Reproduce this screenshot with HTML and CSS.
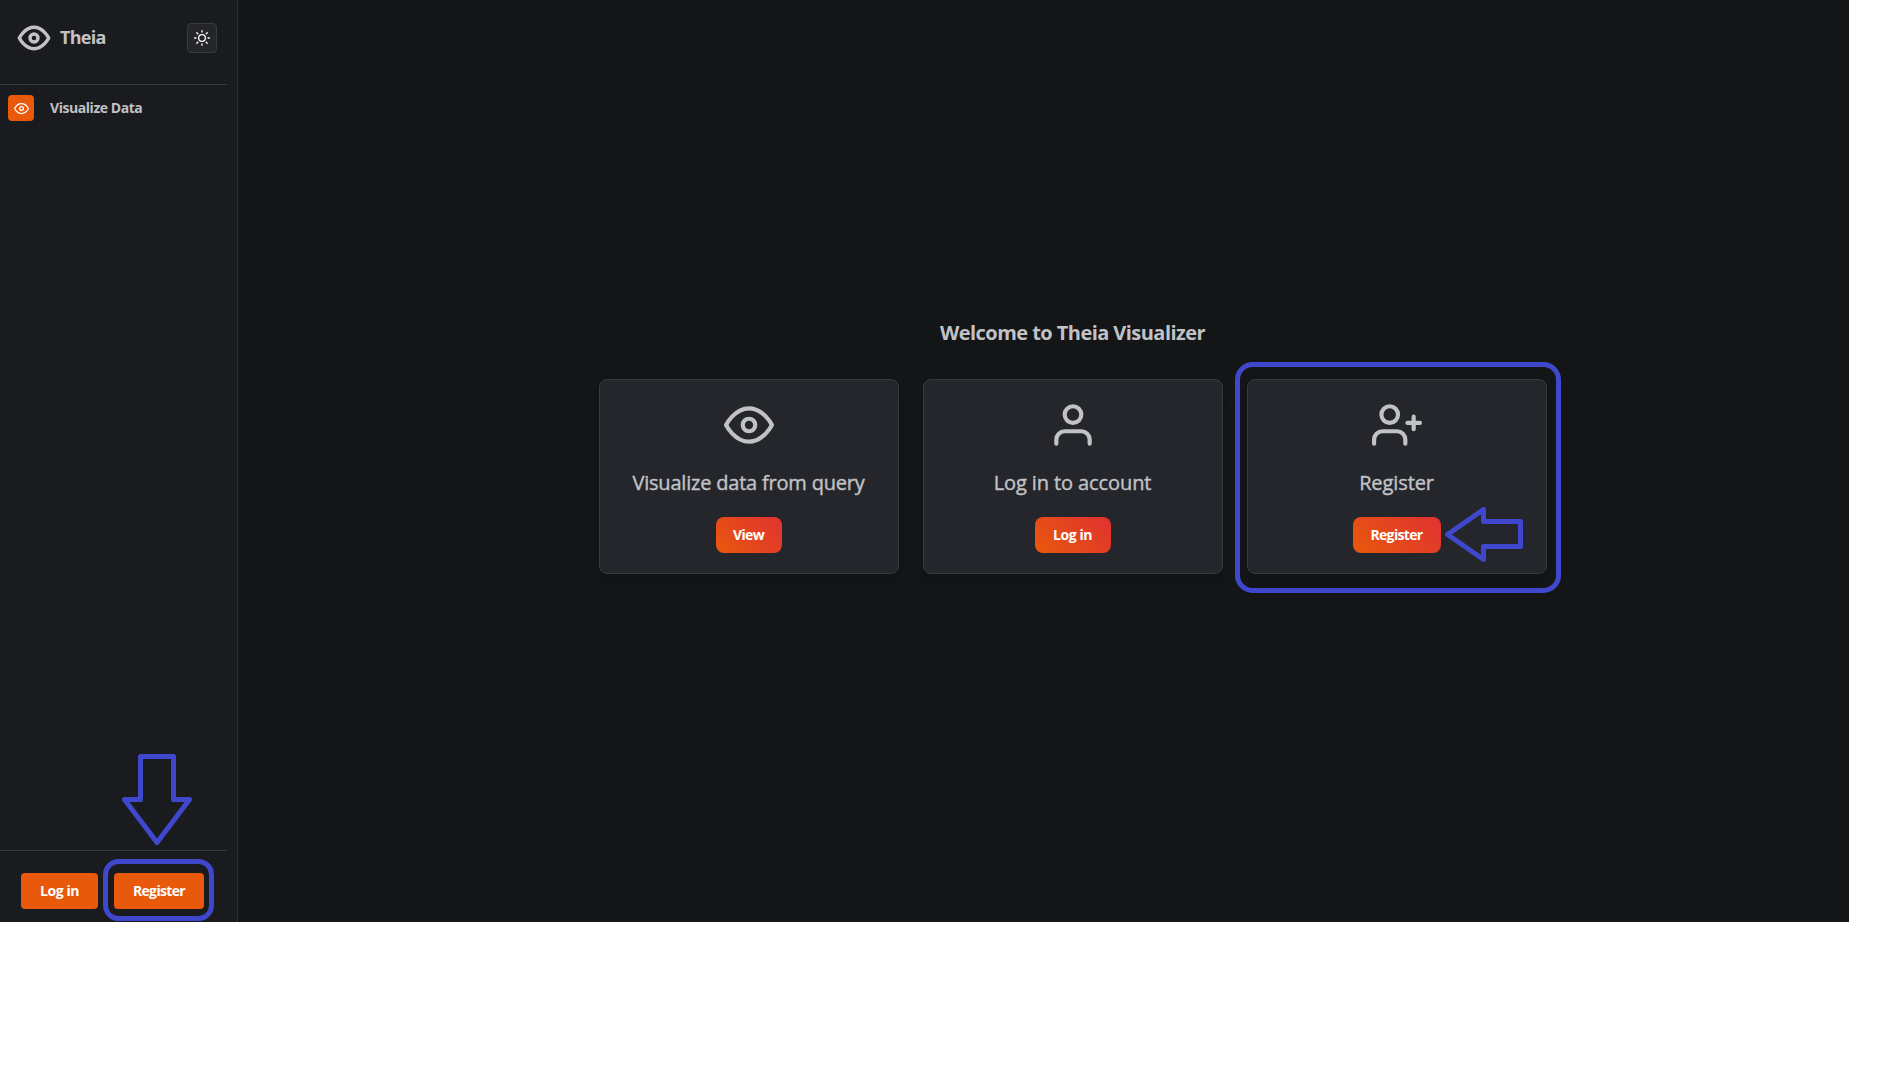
FILE: index.html
```
<!DOCTYPE html>
<html lang="en">
<head>
<meta charset="utf-8">
<title>Theia</title>
<link rel="stylesheet" href="styles.css">
</head>
<body>
<div class="app">
  <aside class="sidebar">
    <header class="brand">
      <svg class="icon brand-icon" viewBox="0 0 24 24"><path d="M1 12s4-8 11-8 11 8 11 8-4 8-11 8-11-8-11-8z"/><circle cx="12" cy="12" r="3"/></svg>
      <span class="brand-name">Theia</span>
      <button class="theme-toggle" aria-label="Toggle theme">
        <svg class="icon" viewBox="0 0 24 24"><circle cx="12" cy="12" r="5"/><path d="M12 1v2M12 21v2M4.22 4.22l1.42 1.42M18.36 18.36l1.42 1.42M1 12h2M21 12h2M4.22 19.78l1.42-1.42M18.36 5.64l1.42-1.42"/></svg>
      </button>
    </header>
    <nav class="nav">
      <a class="nav-item">
        <span class="nav-icon"><svg class="icon" viewBox="0 0 24 24"><path d="M1 12s4-8 11-8 11 8 11 8-4 8-11 8-11-8-11-8z"/><circle cx="12" cy="12" r="3"/></svg></span>
        <span class="nav-label">Visualize Data</span>
      </a>
    </nav>
    <footer class="account">
      <button class="button login">Log in</button>
      <button class="button register">Register</button>
    </footer>
  </aside>
  <main class="main">
    <h1 class="title">Welcome to Theia Visualizer</h1>
    <div class="cards">
      <section class="card">
        <svg class="icon card-icon" viewBox="0 0 24 24"><path d="M1 12s4-8 11-8 11 8 11 8-4 8-11 8-11-8-11-8z"/><circle cx="12" cy="12" r="3"/></svg>
        <h2 class="card-title query">Visualize data from query</h2>
        <button class="button gradient view">View</button>
      </section>
      <section class="card">
        <svg class="icon card-icon" viewBox="0 0 24 24"><path d="M20 21v-2a4 4 0 0 0-4-4H8a4 4 0 0 0-4 4v2"/><circle cx="12" cy="7" r="4"/></svg>
        <h2 class="card-title">Log in to account</h2>
        <button class="button gradient login">Log in</button>
      </section>
      <section class="card">
        <svg class="icon card-icon" viewBox="0 0 24 24"><path d="M16 21v-2a4 4 0 0 0-4-4H5a4 4 0 0 0-4 4v2"/><circle cx="8.5" cy="7" r="4"/><path d="M20 8v6M23 11h-6"/></svg>
        <h2 class="card-title">Register</h2>
        <button class="button gradient register">Register</button>
      </section>
    </div>
  </main>
  <svg class="annotations" viewBox="0 0 1849 922">
    <rect x="1237.5" y="364.5" width="321" height="226" rx="15"/>
    <path d="M1447.5 534.5L1483.5 509.5V521.5H1520.5V546.5H1483.5V559.5Z"/>
    <rect x="105.5" y="861.5" width="106" height="57" rx="13"/>
    <path d="M140.5 756.5H173.5V799.5H189.5L157 842.5L124.5 799.5H140.5Z"/>
  </svg>
</div>
</body>
</html>
```
FILE: styles.css
```
* { box-sizing: border-box; }
body { margin: 0; background: #fff; font-family: "Open Sans", "Noto Sans", sans-serif; }
button { font: inherit; border: 0; padding: 0; }
h1, h2 { margin: 0; }
.icon { fill: none; stroke: currentColor; stroke-width: 2; stroke-linecap: round; stroke-linejoin: round; flex: none; }
.app { position: relative; display: flex; width: 1849px; height: 922px; background: #141517; color: #c1c2c5; }
.sidebar { width: 238px; display: flex; flex-direction: column; padding-right: 10px; background: #1a1b1e; border-right: 1px solid #2c2e33; }
.brand { height: 85px; display: flex; align-items: flex-start; padding: 22px 10px 0 18px; border-bottom: 1px solid #373a40; }
.brand-icon { width: 32px; height: 32px; stroke-width: 2.6; overflow: visible; }
.brand-name { margin: 1px auto 0 10px; font-size: 18px; line-height: 28px; font-weight: 700; letter-spacing: -0.7px; }
.theme-toggle { display: flex; align-items: center; justify-content: center; width: 30px; height: 30px; margin-top: 1px; border: 1px solid #373a40; border-radius: 4px; background: #25262b; color: #fff; }
.theme-toggle .icon { width: 16px; height: 16px; }
.nav { flex: 1; padding: 10px 8px; }
.nav-item { display: flex; align-items: center; gap: 16px; }
.nav-icon { display: flex; align-items: center; justify-content: center; width: 26px; height: 26px; border-radius: 4px; background: #e8590c; color: #fff; }
.nav-icon .icon { width: 15px; height: 15px; }
.nav-label { margin-top: -1px; font-size: 14px; font-weight: 700; letter-spacing: -0.45px; }
.account { display: flex; gap: 16px; height: 72px; padding: 22px 0 0 21px; border-top: 1px solid #373a40; }
.button { height: 36px; border-radius: 4px; background: #e8590c; color: #fff; font-size: 14px; font-weight: 700; line-height: 36px; letter-spacing: -0.65px; text-align: center; }
.login { width: 77px; letter-spacing: -0.4px; }
.register { width: 90px; }
.main { flex: 1; display: flex; flex-direction: column; align-items: center; padding: 317px 0 0 58px; }
.title { font-size: 20px; line-height: 32px; font-weight: 700; letter-spacing: -0.55px; }
.cards { display: flex; gap: 24px; margin-top: 30px; }
.card { width: 300px; height: 195px; display: flex; flex-direction: column; align-items: center; padding-top: 20px; border: 1px solid #373a40; border-radius: 8px; background: #25262b; box-shadow: 0 1px 3px rgba(0, 0, 0, .05), 0 10px 15px -5px rgba(0, 0, 0, .05); }
.card-icon { width: 50px; height: 50px; }
.card-title { margin: 17px 0 19px; font-size: 20px; line-height: 31px; font-weight: 400; letter-spacing: -0.1px; -webkit-text-stroke: 0.4px currentColor; white-space: nowrap; }
.card-title.query { letter-spacing: -0.2px; }
.gradient { border-radius: 8px; background: linear-gradient(45deg, #e8590c 0%, #e03131 100%); }
.gradient.view { width: 66px; }
.gradient.login { width: 76px; }
.gradient.register { width: 88px; }
.annotations { position: absolute; inset: 0; width: 1849px; height: 922px; fill: none; stroke: #3f48cc; stroke-width: 5; stroke-linejoin: round; pointer-events: none; }
```
